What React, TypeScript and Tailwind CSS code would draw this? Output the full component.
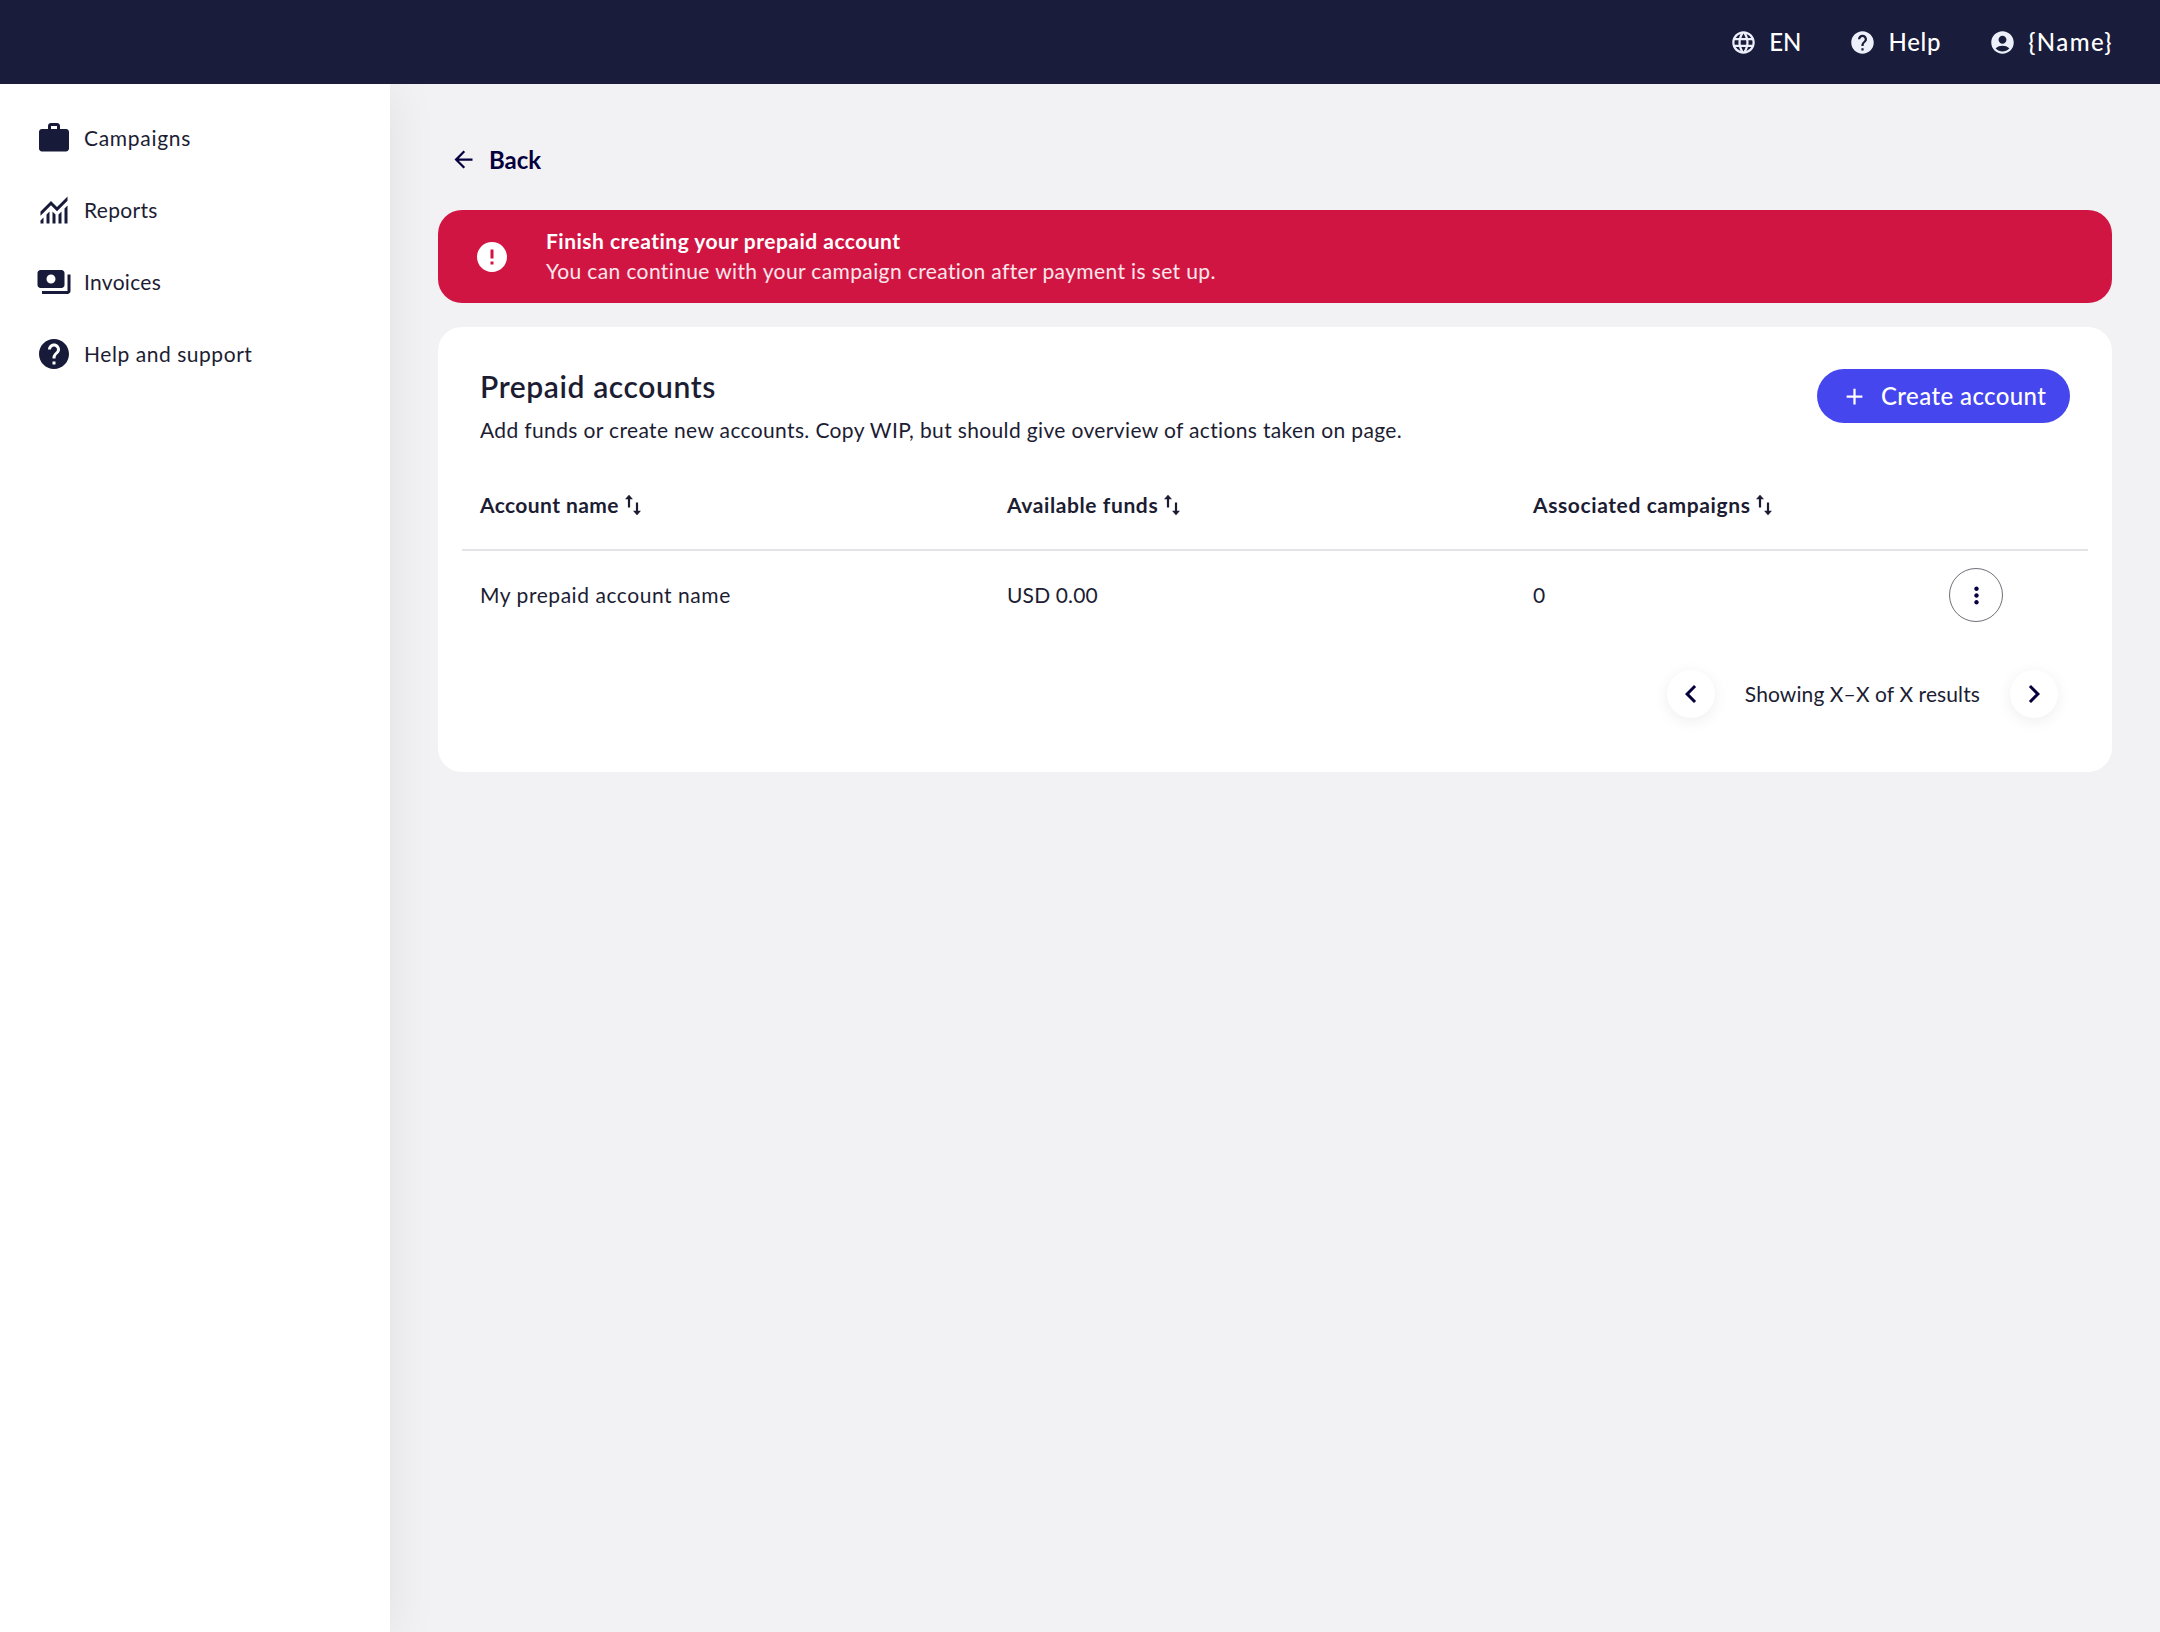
import type { ReactNode } from 'react';
import {
  MdAccountCircle,
  MdAdd,
  MdArrowBack,
  MdChevronLeft,
  MdChevronRight,
  MdError,
  MdHelp,
  MdLanguage,
  MdMoreVert,
  MdPayments,
  MdWork,
} from 'react-icons/md';

function MonitoringIcon() {
  return (
    <svg viewBox="0 -960 960 960" className="size-9" fill="currentColor">
      <path d="M120-120v-80l80-80v160h-80Zm160 0v-240l80-80v320h-80Zm160 0v-320l80 81v239h-80Zm160 0v-239l80-80v319h-80Zm160 0v-400l80-80v480h-80ZM120-327v-113l280-280 160 160 280-280v113L560-447 400-607 120-327Z" />
    </svg>
  );
}

function SortIcon() {
  return (
    <svg viewBox="0 0 16 22" className="h-[22px] w-4" fill="currentColor">
      <path d="M4 .8 8 5.2H5.1V13.5H2.9V5.2H0ZM10.9 8.5h2.2v8.3H16L12 21.2 8 16.8h2.9Z" />
    </svg>
  );
}

const navItems = [
  { label: 'Campaigns', icon: <MdWork className="size-9" />, tracking: 'tracking-[0.7px]' },
  { label: 'Reports', icon: <MonitoringIcon />, tracking: 'tracking-[0.3px]' },
  { label: 'Invoices', icon: <MdPayments className="size-9" />, tracking: 'tracking-[0.3px]' },
  { label: 'Help and support', icon: <MdHelp className="size-9" />, tracking: 'tracking-[0.55px]' },
];

const columns = [
  { label: 'Account name', tracking: 'tracking-[0.4px]' },
  { label: 'Available funds', tracking: 'tracking-[0.6px]' },
  { label: 'Associated campaigns', tracking: 'tracking-[0.6px]' },
];

function TopLink({ icon, children }: { icon: ReactNode; children: ReactNode }) {
  return (
    <a href="#" className="flex items-center gap-3 text-2xl font-medium text-white">
      <span className="text-[#edeffa]">{icon}</span>
      {children}
    </a>
  );
}

function PageButton({ label, children }: { label: string; children: ReactNode }) {
  return (
    <button
      aria-label={label}
      className="flex size-12 items-center justify-center rounded-full bg-white text-[#05003d] shadow-[0_3px_15px_rgba(0,0,0,0.07)]"
    >
      {children}
    </button>
  );
}

export default function App() {
  return (
    <div className="flex h-[1632px] w-[2160px] flex-col overflow-hidden bg-[#f2f2f5] font-['Lato','Liberation_Sans',sans-serif] text-[21px] leading-[30px] text-[#1c1d33]">
      {/* Top bar */}
      <header className="relative z-10 flex h-[84px] shrink-0 items-center justify-end gap-12 bg-[#191c3a] pr-[47px]">
        <TopLink icon={<MdLanguage className="size-[27px]" />}>
          <span>EN</span>
        </TopLink>
        <TopLink icon={<MdHelp className="size-[27px]" />}>
          <span className="tracking-[0.7px]">Help</span>
        </TopLink>
        <TopLink icon={<MdAccountCircle className="size-[27px]" />}>
          <span className="tracking-[1.4px]">{'{Name}'}</span>
        </TopLink>
      </header>

      <div className="flex flex-1">
        {/* Sidebar */}
        <nav className="w-[390px] shrink-0 bg-white pt-[18px] shadow-[0_6px_48px_rgba(0,0,0,0.08)]">
          {navItems.map((item) => (
            <a key={item.label} href="#" className="flex h-[72px] items-center gap-3 pl-9">
              <span className="text-[#171a38]">{item.icon}</span>
              <span className={item.tracking}>{item.label}</span>
            </a>
          ))}
        </nav>

        {/* Content */}
        <main className="flex-1 pt-[45px] pr-12 pl-12">
          <button className="ml-3 flex h-[60px] items-center gap-3 text-2xl font-bold text-[#05003d]">
            <MdArrowBack className="size-[27px]" />
            <span className="pt-0.5">Back</span>
          </button>

          <div className="mt-[21px] flex h-[93px] items-center rounded-3xl bg-[#d11543] pl-9 text-white">
            <MdError className="size-9" />
            <div className="ml-9 pb-px">
              <p className="font-bold tracking-[0.48px]">Finish creating your prepaid account</p>
              <p className="tracking-[0.38px] text-white/90">
                You can continue with your campaign creation after payment is set up.
              </p>
            </div>
          </div>

          <section className="mt-6 h-[445px] rounded-3xl bg-white px-6 pt-[42px]">
            <div className="flex items-start justify-between px-[18px]">
              <div>
                <h1 className="text-[30px] leading-[34px] font-semibold tracking-[0.6px]">Prepaid accounts</h1>
                <p className="mt-3 tracking-[0.355px]">
                  Add funds or create new accounts. Copy WIP, but should give overview of actions taken on page.
                </p>
              </div>
              <button className="flex h-[54px] w-[253px] items-center rounded-full bg-[#4646ee] pl-6 text-2xl font-medium text-white">
                <MdAdd className="size-[27px]" />
                <span className="ml-[13px] tracking-[0.4px]">Create account</span>
              </button>
            </div>

            <div className="mt-4 grid h-[90px] grid-cols-[527px_526px_1fr] items-center border-b-2 border-[#e3e4e8] pl-[18px] font-bold">
              {columns.map((column) => (
                <div key={column.label} className="flex items-center gap-[6px]">
                  <span className={column.tracking}>{column.label}</span>
                  <SortIcon />
                </div>
              ))}
            </div>

            <div className="grid h-[88px] grid-cols-[527px_526px_416px_1fr] items-center pl-[18px]">
              <span className="tracking-[0.55px]">My prepaid account name</span>
              <span className="tracking-[0.15px]">USD 0.00</span>
              <span>0</span>
              <button
                aria-label="Account actions"
                className="flex size-[54px] items-center justify-center rounded-full border-[1.5px] border-[#6f6f78] text-[#05003d]"
              >
                <MdMoreVert className="size-[27px]" />
              </button>
            </div>

            <div className="mt-[31px] flex items-center justify-end gap-[30px] pr-[30px]">
              <PageButton label="Previous page">
                <MdChevronLeft className="size-9" />
              </PageButton>
              <span className="tracking-[0.1px]">Showing X–X of X results</span>
              <PageButton label="Next page">
                <MdChevronRight className="size-9" />
              </PageButton>
            </div>
          </section>
        </main>
      </div>
    </div>
  );
}
